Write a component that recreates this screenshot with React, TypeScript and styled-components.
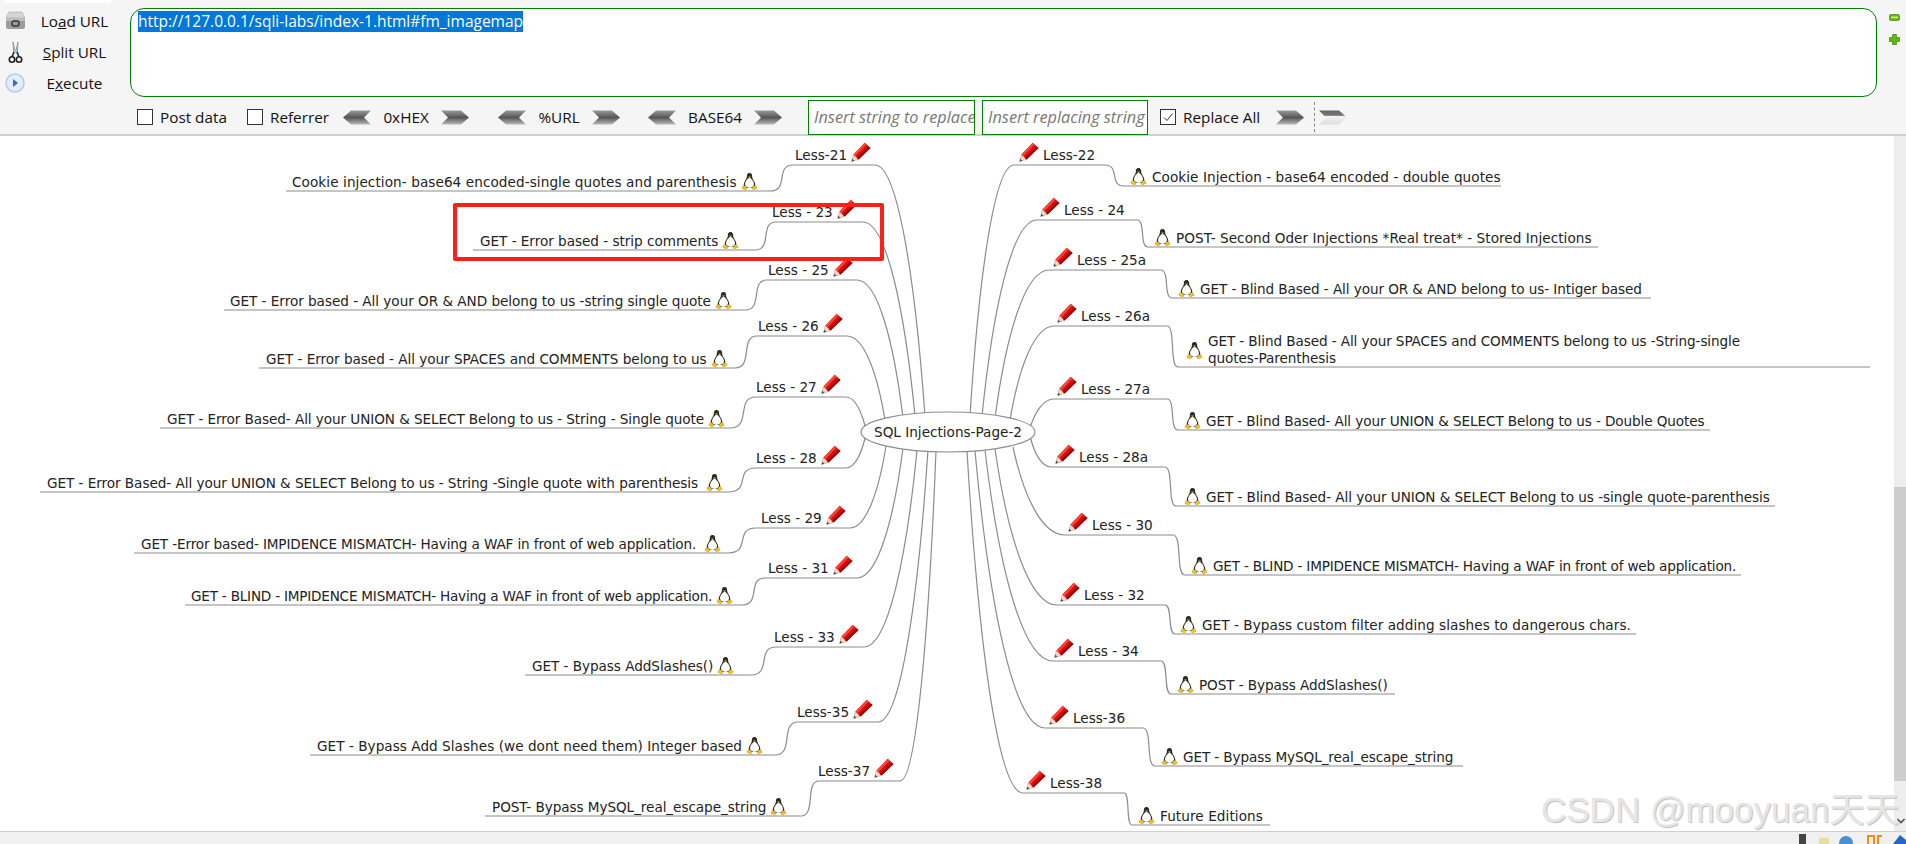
import React from 'react';
import styled, { createGlobalStyle } from 'styled-components';

const TOOLBAR_H = 136;

const GlobalStyle = createGlobalStyle`
  html, body {
    margin: 0;
    padding: 0;
    background: #fff;
    overflow: hidden;
  }
`;

const Page = styled.div`
  position: relative;
  width: 1906px;
  height: 844px;
  display: flex;
  flex-direction: column;
  overflow: hidden;
  font-family: "Open Sans", "Liberation Sans", sans-serif;
`;

const Toolbar = styled.div`
  height: ${TOOLBAR_H - 2}px;
  flex: none;
  background: #f5f5f5;
  border-bottom: 2px solid #cfcfcf;
  position: relative;
  display: grid;
  grid-template-columns: 130px 1747px 29px;
  grid-template-rows: 96px 38px;
`;

const TopTab = styled.div`
  position: absolute;
  left: 4px;
  top: 0;
  width: 107px;
  height: 3px;
  background: #fff;
`;

const SideButtons = styled.div`
  display: flex;
  flex-direction: column;
  padding-top: 9px;
  gap: 7px;
`;

const SideButton = styled.div`
  height: 24px;
  display: grid;
  grid-template-columns: 30px 1fr;
  align-items: center;
  font-size: 15.3px;
  color: #111;
  u { text-decoration-thickness: 1px; }
`;

const SideIcon = styled.div`
  display: flex;
  justify-content: center;
`;

const SideLabel = styled.div`
  text-align: center;
  padding-right: 11px;
`;

const UrlWrap = styled.div`
  padding-top: 8px;
`;

const UrlBox = styled.div`
  box-sizing: border-box;
  height: 89px;
  background: #fff;
  border: 1.5px solid #008000;
  border-radius: 14px;
  padding: 2px 7px;
  font-size: 15.5px;
  line-height: 21px;
  color: #fff;
  span {
    display: inline-block;
    background: #0078d7;
    height: 21px;
  }
`;

const ZoomIcons = styled.div`
  display: flex;
  flex-direction: column;
  align-items: center;
  padding: 14px 0 0 6px;
  gap: 13px;
`;

const OptionRow = styled.div`
  grid-column: 2 / 4;
  display: flex;
  align-items: center;
  height: 34px;
  margin-top: 4px;
  font-size: 15.3px;
  color: #111;
  padding-left: 7px;
`;

const Check = styled.span`
  width: 14px;
  height: 14px;
  border: 1px solid #333;
  background: #fff;
  margin-right: 7px;
  display: inline-flex;
  align-items: center;
  justify-content: center;
  flex: none;
`;

const Gap = styled.span<{ $w: number }>`
  flex: none;
  width: ${p => p.$w}px;
`;

const EncodeLabel = styled.span<{ $w: number }>`
  flex: none;
  width: ${p => p.$w}px;
  text-align: center;
`;

const ReplaceInput = styled.div<{ $w: number }>`
  flex: none;
  box-sizing: border-box;
  width: ${p => p.$w}px;
  height: 35px;
  border: 1px solid #008000;
  background: #fff;
  color: #777;
  font-style: italic;
  font-size: 16.3px;
  line-height: 33px;
  padding-left: 5px;
  white-space: nowrap;
  overflow: hidden;
`;

const Separator = styled.span`
  flex: none;
  width: 0;
  height: 30px;
  border-left: 1px dashed #888;
`;

const Body = styled.div`
  flex: 1;
  display: flex;
  min-height: 0;
`;

const Canvas = styled.div`
  position: relative;
  flex: 1;
  background: #fff;
  font-family: "DejaVu Sans", sans-serif;
  font-size: 13.6px;
  color: #222;
`;

const Wires = styled.svg`
  position: absolute;
  left: 0;
  top: 0;
`;

const Node = styled.div.attrs<{ $x: number; $y: number }>(p => ({
  style: { left: p.$x, top: p.$y - TOOLBAR_H - 24 },
}))<{ $x: number; $y: number }>`
  position: absolute;
  height: 24px;
  display: flex;
  align-items: flex-end;
  white-space: pre;
  line-height: 18px;
`;

const DescText = styled.span<{ $track?: number }>`
  letter-spacing: ${p => p.$track ?? 0}px;
`;

const WrappedNode = styled.div.attrs<{ $x: number; $y: number }>(p => ({
  style: { left: p.$x, top: p.$y - TOOLBAR_H },
}))<{ $x: number; $y: number; $track?: number }>`
  position: absolute;
  line-height: 17px;
  white-space: nowrap;
  letter-spacing: ${p => p.$track ?? 0}px;
`;

const HubLabel = styled.div`
  position: absolute;
  left: 861px;
  top: ${412 - TOOLBAR_H}px;
  width: 174px;
  height: 40px;
  display: flex;
  align-items: center;
  justify-content: center;
`;

const Highlight = styled.div`
  position: absolute;
  left: 453px;
  top: ${203 - TOOLBAR_H}px;
  width: 423px;
  height: 50px;
  border: 4px solid #fc2016;
  border-radius: 2px;
`;

const Scrollbar = styled.div`
  flex: none;
  width: 12px;
  background: #eeeeee;
  position: relative;
`;

const ScrollThumb = styled.div`
  position: absolute;
  left: 0;
  right: 0;
  top: ${487 - TOOLBAR_H}px;
  height: 294px;
  background: #cdcdcd;
`;

const ScrollArrow = styled.svg`
  position: absolute;
  left: 3px;
  bottom: 7px;
`;

const StatusBar = styled.div`
  height: 12px;
  flex: none;
  background: #f0f0f0;
  border-top: 1px solid #cfcfcf;
  overflow: hidden;
  position: relative;
`;

const Tray = styled.svg`
  position: absolute;
  right: 0;
  top: 0;
`;

const Watermark = styled.div`
  position: absolute;
  left: 1541px;
  top: 790px;
  font-family: "Liberation Sans", "Noto Sans CJK SC", sans-serif;
  font-size: 35px;
  line-height: 40px;
  white-space: nowrap;
  color: #e6e6e6;
  text-shadow: 1px 1px 1px #bdbdbd;
`;

const PencilSvg = styled.svg<{ $before?: number; $after?: number }>`
  flex: none;
  margin-bottom: 2px;
  margin-left: ${p => p.$before ?? 0}px;
  margin-right: ${p => p.$after ?? 0}px;
`;

const PenguinSvg = styled.svg<{ $before?: number; $after?: number }>`
  flex: none;
  margin-left: ${p => p.$before ?? 0}px;
  margin-right: ${p => p.$after ?? 0}px;
`;

const Pencil = ({ before, after }: { before?: number; after?: number }) => (
  <PencilSvg width="20" height="20" viewBox="0 0 19 19" $before={before} $after={after}>
    <path d="M.6 18.6 L2.2 12 L7 16.6 Z" fill="#eed9c6" stroke="#a89a90" strokeWidth=".5" />
    <path d="M.6 18.6 L1.2 16 L3.2 17.8 Z" fill="#444" />
    <path d="M2.4 11.8 L13 .8 L18.6 5.8 L7.2 16.6 Z" fill="#dc0c0c" />
    <path d="M2.4 11.8 L13 .8 L14.8 2.4 L4.2 13.6 Z" fill="#f4473a" />
    <path d="M5.6 15.2 L16.8 4.2 L18.6 5.8 L7.2 16.6 Z" fill="#9c0808" />
  </PencilSvg>
);

const Penguin = ({ before, after }: { before?: number; after?: number }) => (
  <PenguinSvg width="17" height="19" viewBox="0 0 16 17" $before={before} $after={after}>
    <path d="M8 .5 C5.8 .5 5.4 2.4 5.5 4.2 C5.5 6 3 8.2 2.6 11 C2.4 12.6 3 14 4 14.6 L12 14.6 C13 14 13.6 12.6 13.4 11 C13 8.2 10.5 6 10.5 4.2 C10.6 2.4 10.2 .5 8 .5 Z" fill="#2a2a2a" />
    <path d="M8 5 C6 5.6 3.8 8.6 3.8 11.2 C3.8 13 5.4 14.6 8 14.6 C10.6 14.6 12.2 13 12.2 11.2 C12.2 8.6 10 5.6 8 5 Z" fill="#fff" />
    <path d="M6.6 3.8 L9.4 3.8 L8 5.4 Z" fill="#e8b020" />
    <path d="M1 14 C1.4 12.6 3.4 12 4.4 13 C5.4 14.2 5.8 15.4 5 16 C3.8 16.8 2.6 15.4 1 15 Z" fill="#f1c21e" stroke="#b98a10" strokeWidth=".4" />
    <path d="M15 14 C14.6 12.6 12.6 12 11.6 13 C10.6 14.2 10.2 15.4 11 16 C12.2 16.8 13.4 15.4 15 15 Z" fill="#f1c21e" stroke="#b98a10" strokeWidth=".4" />
  </PenguinSvg>
);

const Chevron = ({ dir, light }: { dir: 'left' | 'right'; light?: boolean }) => {
  const id = `chev-${dir}-${light ? 'l' : 'd'}`;
  const points =
    dir === 'left'
      ? '0,7.5 8,0.5 28,0.5 21,7.5 28,14.5 8,14.5'
      : '0,0.5 20,0.5 28,7.5 20,14.5 0,14.5 7,7.5';
  return (
    <svg width="28" height="15" viewBox="0 0 28 15" style={{ flex: 'none' }}>
      <defs>
        <linearGradient id={id} x1="0" y1="0" x2="0" y2="1">
          {light ? (
            <>
              <stop offset="0" stopColor="#666" />
              <stop offset=".35" stopColor="#777" />
              <stop offset=".4" stopColor="#f4f4f4" />
              <stop offset="1" stopColor="#ddd" />
            </>
          ) : (
            <>
              <stop offset="0" stopColor="#9a9a9a" />
              <stop offset=".5" stopColor="#565656" />
              <stop offset="1" stopColor="#b8b8b8" />
            </>
          )}
        </linearGradient>
      </defs>
      <polygon points={points} fill={`url(#${id})`} />
    </svg>
  );
};

const LoadIcon = () => (
  <svg width="21" height="20" viewBox="0 0 21 20">
    <path d="M4 1 L17 1 L20 7 L1 7 Z" fill="#d4d4d4" stroke="#aaa" strokeWidth=".6" />
    <rect x="1" y="7" width="19" height="11" rx="2" fill="#9c9c9c" />
    <rect x="1" y="7" width="19" height="3" fill="#bdbdbd" />
    <rect x="7" y="10" width="7" height="5" rx="2" fill="none" stroke="#333" strokeWidth="1.4" />
  </svg>
);

const ScissorsIcon = () => (
  <svg width="15" height="23" viewBox="0 0 15 23">
    <path d="M5 1 L5.6 11 L9.4 11 L10 1 L8.2 9 L6.8 9 Z" fill="#cfe4ef" stroke="#6f97ad" strokeWidth=".9" />
    <path d="M6 11 L4 16 M9 11 L11 16" stroke="#222" strokeWidth="1.6" />
    <circle cx="4" cy="18.5" r="2.7" fill="none" stroke="#222" strokeWidth="1.6" />
    <circle cx="11" cy="18.5" r="2.7" fill="none" stroke="#222" strokeWidth="1.6" />
  </svg>
);

const PlayIcon = () => (
  <svg width="20" height="20" viewBox="0 0 20 20">
    <circle cx="10" cy="10" r="9" fill="#e4eefb" stroke="#b3cdec" strokeWidth="1.6" />
    <path d="M8 6 L13 10 L8 14 Z" fill="#2f6fc4" />
  </svg>
);

const MinusIcon = () => (
  <svg width="11" height="7" viewBox="0 0 11 7">
    <rect x=".5" y=".5" width="10" height="6" rx="1.5" fill="#62b800" stroke="#5c8a2a" strokeWidth=".8" />
    <rect x="2" y="2.6" width="7" height="1.6" fill="#d4f28c" />
  </svg>
);

const PlusIcon = () => (
  <svg width="11" height="11" viewBox="0 0 11 11">
    <path d="M3.6 .5 H7.4 V3.6 H10.5 V7.4 H7.4 V10.5 H3.6 V7.4 H.5 V3.6 H3.6 Z" fill="#5cc000" stroke="#4d7f24" strokeWidth=".8" />
  </svg>
);

type Branch = {
  label: string;
  labelX: number;
  topY: number;
  riseX: number;
  hubEndX: number;
  hubX: number;
  hubY: number;
  desc: string;
  descX: number;
  descY: number;
  lineX1: number;
  lineX2: number;
  track?: number; // letter spacing, the map's hinted text runs a little off the font's widths
};

const leftBranches: Branch[] = [
  { label: 'Less-21', labelX: 795, topY: 165, riseX: 785, hubEndX: 875, hubX: 925, hubY: 416, desc: 'Cookie injection- base64 encoded-single quotes and parenthesis', descX: 292, descY: 191, lineX1: 286, lineX2: 770, track: 0.08 },
  { label: 'Less - 23', labelX: 772, topY: 222, riseX: 768, hubEndX: 863, hubX: 915, hubY: 416, desc: 'GET - Error based - strip comments', descX: 480, descY: 250, lineX1: 473, lineX2: 755, track: -0.03 },
  { label: 'Less - 25', labelX: 768, topY: 280, riseX: 759, hubEndX: 857, hubX: 903, hubY: 418, desc: 'GET - Error based - All your OR & AND belong to us -string single quote', descX: 230, descY: 310, lineX1: 224, lineX2: 745, track: -0.035 },
  { label: 'Less - 26', labelX: 758, topY: 336, riseX: 749, hubEndX: 847, hubX: 885, hubY: 420, desc: 'GET - Error based - All your SPACES and COMMENTS belong to us', descX: 266, descY: 368, lineX1: 259, lineX2: 735, track: -0.04 },
  { label: 'Less - 27', labelX: 756, topY: 397, riseX: 748, hubEndX: 846, hubX: 866, hubY: 430, desc: 'GET - Error Based- All your UNION & SELECT Belong to us - String - Single quote', descX: 167, descY: 428, lineX1: 160, lineX2: 730, track: -0.077 },
  { label: 'Less - 28', labelX: 756, topY: 468, riseX: 748, hubEndX: 846, hubX: 866, hubY: 434, desc: 'GET - Error Based- All your UNION & SELECT Belong to us - String -Single quote with parenthesis ', descX: 47, descY: 492, lineX1: 40, lineX2: 728, track: -0.05 },
  { label: 'Less - 29', labelX: 761, topY: 528, riseX: 748, hubEndX: 850, hubX: 886, hubY: 446, desc: 'GET -Error based- IMPIDENCE MISMATCH- Having a WAF in front of web application. ', descX: 141, descY: 553, lineX1: 134, lineX2: 728, track: -0.137 },
  { label: 'Less - 31', labelX: 768, topY: 578, riseX: 757, hubEndX: 857, hubX: 903, hubY: 448, desc: 'GET - BLIND - IMPIDENCE MISMATCH- Having a WAF in front of web application.', descX: 191, descY: 605, lineX1: 185, lineX2: 742, track: -0.22 },
  { label: 'Less - 33', labelX: 774, topY: 647, riseX: 768, hubEndX: 864, hubX: 917, hubY: 450, desc: 'GET - Bypass AddSlashes()', descX: 532, descY: 675, lineX1: 525, lineX2: 751, track: -0.05 },
  { label: 'Less-35', labelX: 797, topY: 722, riseX: 790, hubEndX: 878, hubX: 928, hubY: 450, desc: 'GET - Bypass Add Slashes (we dont need them) Integer based', descX: 317, descY: 755, lineX1: 310, lineX2: 775, track: 0.04 },
  { label: 'Less-37', labelX: 818, topY: 781, riseX: 811, hubEndX: 900, hubX: 936, hubY: 451, desc: 'POST- Bypass MySQL_real_escape_string', descX: 492, descY: 816, lineX1: 485, lineX2: 801, track: -0.065 },
];

const rightBranches: Branch[] = [
  { label: 'Less-22', labelX: 1043, topY: 165, riseX: 1105, hubEndX: 1014, hubX: 970, hubY: 416, desc: 'Cookie Injection - base64 encoded - double quotes', descX: 1152, descY: 186, lineX1: 1124, lineX2: 1501, track: 0.07 },
  { label: 'Less - 24', labelX: 1064, topY: 220, riseX: 1137, hubEndX: 1037, hubX: 982, hubY: 416, desc: 'POST- Second Oder Injections *Real treat* - Stored Injections', descX: 1176, descY: 247, lineX1: 1148, lineX2: 1598, track: 0.04 },
  { label: 'Less - 25a', labelX: 1077, topY: 270, riseX: 1161, hubEndX: 1049, hubX: 995, hubY: 418, desc: 'GET - Blind Based - All your OR & AND belong to us- Intiger based', descX: 1200, descY: 298, lineX1: 1172, lineX2: 1651, track: -0.09 },
  { label: 'Less - 26a', labelX: 1081, topY: 326, riseX: 1167, hubEndX: 1054, hubX: 1010, hubY: 420, desc: 'GET - Blind Based - All your SPACES and COMMENTS belong to us -String-single\nquotes-Parenthesis', descX: 1208, descY: 367, lineX1: 1178, lineX2: 1870, track: -0.1 },
  { label: 'Less - 27a', labelX: 1081, topY: 399, riseX: 1167, hubEndX: 1054, hubX: 1030, hubY: 428, desc: 'GET - Blind Based- All your UNION & SELECT Belong to us - Double Quotes', descX: 1206, descY: 430, lineX1: 1178, lineX2: 1710, track: -0.1 },
  { label: 'Less - 28a', labelX: 1079, topY: 467, riseX: 1165, hubEndX: 1051, hubX: 1030, hubY: 436, desc: 'GET - Blind Based- All your UNION & SELECT Belong to us -single quote-parenthesis', descX: 1206, descY: 506, lineX1: 1176, lineX2: 1775, track: -0.06 },
  { label: 'Less - 30', labelX: 1092, topY: 535, riseX: 1173, hubEndX: 1065, hubX: 1013, hubY: 447, desc: 'GET - BLIND - IMPIDENCE MISMATCH- Having a WAF in front of web application.', descX: 1213, descY: 575, lineX1: 1185, lineX2: 1741, track: -0.195 },
  { label: 'Less - 32', labelX: 1084, topY: 605, riseX: 1165, hubEndX: 1057, hubX: 995, hubY: 449, desc: 'GET - Bypass custom filter adding slashes to dangerous chars.', descX: 1202, descY: 634, lineX1: 1175, lineX2: 1636, track: 0.06 },
  { label: 'Less - 34', labelX: 1078, topY: 661, riseX: 1161, hubEndX: 1053, hubX: 985, hubY: 450, desc: 'POST - Bypass AddSlashes()', descX: 1199, descY: 694, lineX1: 1171, lineX2: 1395, track: -0.09 },
  { label: 'Less-36', labelX: 1073, topY: 728, riseX: 1143, hubEndX: 1045, hubX: 975, hubY: 451, desc: 'GET - Bypass MySQL_real_escape_string', descX: 1183, descY: 766, lineX1: 1155, lineX2: 1463, track: -0.1 },
  { label: 'Less-38', labelX: 1050, topY: 793, riseX: 1124, hubEndX: 1023, hubX: 967, hubY: 451, desc: 'Future Editions', descX: 1160, descY: 825, lineX1: 1132, lineX2: 1270, track: 0.08 },
];

// hub curve: leaves the ellipse steeply and flattens into the label's line
const hubPath = (b: Branch) => {
  const dx = b.hubEndX - b.hubX;
  const dy = b.topY - b.hubY;
  return `M${b.hubX} ${b.hubY} C${b.hubX + dx * 0.2} ${b.hubY + dy * 0.55} ${b.hubEndX - dx * 0.45} ${b.topY} ${b.hubEndX} ${b.topY}`;
};

// S bend between the label line and the description line
const leftPath = (b: Branch) => {
  const end = b.riseX + 8;
  const w = end - b.lineX2;
  return `M${b.lineX1} ${b.descY} L${b.lineX2} ${b.descY} C${b.lineX2 + w * 0.85} ${b.descY} ${b.lineX2 + w * 0.2} ${b.topY} ${end} ${b.topY} L${b.hubEndX} ${b.topY}`;
};

const rightPath = (b: Branch) => {
  const w = b.lineX1 - b.riseX;
  return `M${b.hubEndX} ${b.topY} L${b.riseX} ${b.topY} C${b.riseX + w * 0.8} ${b.topY} ${b.riseX + w * 0.2} ${b.descY} ${b.lineX1} ${b.descY} L${b.lineX2} ${b.descY}`;
};

const App = () => (
  <Page>
    <GlobalStyle />
    <Toolbar>
      <TopTab />
      <SideButtons>
        <SideButton>
          <SideIcon><LoadIcon /></SideIcon>
          <SideLabel>Lo<u>a</u>d URL</SideLabel>
        </SideButton>
        <SideButton>
          <SideIcon><ScissorsIcon /></SideIcon>
          <SideLabel><u>S</u>plit URL</SideLabel>
        </SideButton>
        <SideButton>
          <SideIcon><PlayIcon /></SideIcon>
          <SideLabel>E<u>x</u>ecute</SideLabel>
        </SideButton>
      </SideButtons>
      <UrlWrap>
        <UrlBox><span>http://127.0.0.1/sqli-labs/index-1.html#fm_imagemap</span></UrlBox>
      </UrlWrap>
      <ZoomIcons>
        <MinusIcon />
        <PlusIcon />
      </ZoomIcons>
      <OptionRow>
        <Check />
        <span>Post data</span>
        <Gap $w={20} />
        <Check />
        <span>Referrer</span>
        <Gap $w={14} />
        <Chevron dir="left" />
        <EncodeLabel $w={70}>0xHEX</EncodeLabel>
        <Chevron dir="right" />
        <Gap $w={29} />
        <Chevron dir="left" />
        <EncodeLabel $w={66}>%URL</EncodeLabel>
        <Chevron dir="right" />
        <Gap $w={28} />
        <Chevron dir="left" />
        <EncodeLabel $w={78}>BASE64</EncodeLabel>
        <Chevron dir="right" />
        <Gap $w={26} />
        <ReplaceInput $w={167}>Insert string to replace</ReplaceInput>
        <Gap $w={7} />
        <ReplaceInput $w={166}>Insert replacing string</ReplaceInput>
        <Gap $w={12} />
        <Check>
          <svg width="12" height="12" viewBox="0 0 12 12">
            <path d="M2 6.5 L5 9.5 L10.5 2.5" fill="none" stroke="#333" strokeWidth="1" />
          </svg>
        </Check>
        <span>Replace All</span>
        <Gap $w={16} />
        <Chevron dir="right" />
        <Gap $w={10} />
        <Separator />
        <Gap $w={4} />
        <Chevron dir="right" light />
      </OptionRow>
    </Toolbar>
    <Body>
      <Canvas>
        <Wires width="1894" height="695" viewBox={`0 ${TOOLBAR_H} 1894 695`} fill="none" stroke="#8c8c8c" strokeWidth="1.2">
          {leftBranches.map(b => (
            <g key={b.label}>
              <path d={leftPath(b)} />
              <path d={hubPath(b)} />
            </g>
          ))}
          {rightBranches.map(b => (
            <g key={b.label}>
              <path d={rightPath(b)} />
              <path d={hubPath(b)} />
            </g>
          ))}
          <ellipse cx="948" cy="432" rx="87" ry="20" fill="#fff" />
        </Wires>
        <HubLabel>SQL Injections-Page-2</HubLabel>
        {leftBranches.map(b => (
          <React.Fragment key={b.label}>
            <Node $x={b.labelX} $y={b.topY - 1}>
              <span>{b.label}</span>
              <Pencil before={4} />
            </Node>
            <Node $x={b.descX} $y={b.descY}>
              <DescText $track={b.track}>{b.desc}</DescText>
              <Penguin before={4} />
            </Node>
          </React.Fragment>
        ))}
        {rightBranches.map(b => (
          <React.Fragment key={b.label}>
            <Node $x={b.labelX - 24} $y={b.topY - 1}>
              <Pencil after={4} />
              <span>{b.label}</span>
            </Node>
            {b.desc.includes('\n') ? (
              <>
                <Node $x={b.descX - 22} $y={b.descY - 7}>
                  <Penguin />
                </Node>
                <WrappedNode $x={b.descX} $y={b.descY - 34} $track={b.track}>
                  {b.desc.split('\n').map(line => <div key={line}>{line}</div>)}
                </WrappedNode>
              </>
            ) : (
              <Node $x={b.descX - 22} $y={b.descY}>
                <Penguin after={5} />
                <DescText $track={b.track}>{b.desc}</DescText>
              </Node>
            )}
          </React.Fragment>
        ))}
        <Highlight />
      </Canvas>
      <Scrollbar>
        <ScrollThumb />
        <ScrollArrow width="8" height="6" viewBox="0 0 8 6">
          <path d="M.5 1 L4 4.5 L7.5 1" fill="none" stroke="#555" strokeWidth="1.6" />
        </ScrollArrow>
      </Scrollbar>
    </Body>
    <StatusBar>
      <Tray width="126" height="12" viewBox="0 0 126 12">
        <rect x="19" y="2" width="7" height="10" fill="#444" />
        <rect x="39" y="6" width="10" height="6" fill="#e9df9c" />
        <circle cx="66" cy="11" r="7" fill="#4a8fd0" />
        <path d="M88 12 V4 H94 V12 M98 12 V4 H102" fill="none" stroke="#ef8c12" strokeWidth="2" />
        <path d="M113 12 L120 3 L126 8 V12 Z" fill="#2366c4" />
      </Tray>
    </StatusBar>
    <Watermark>CSDN @mooyuan天天</Watermark>
  </Page>
);

export default App;
